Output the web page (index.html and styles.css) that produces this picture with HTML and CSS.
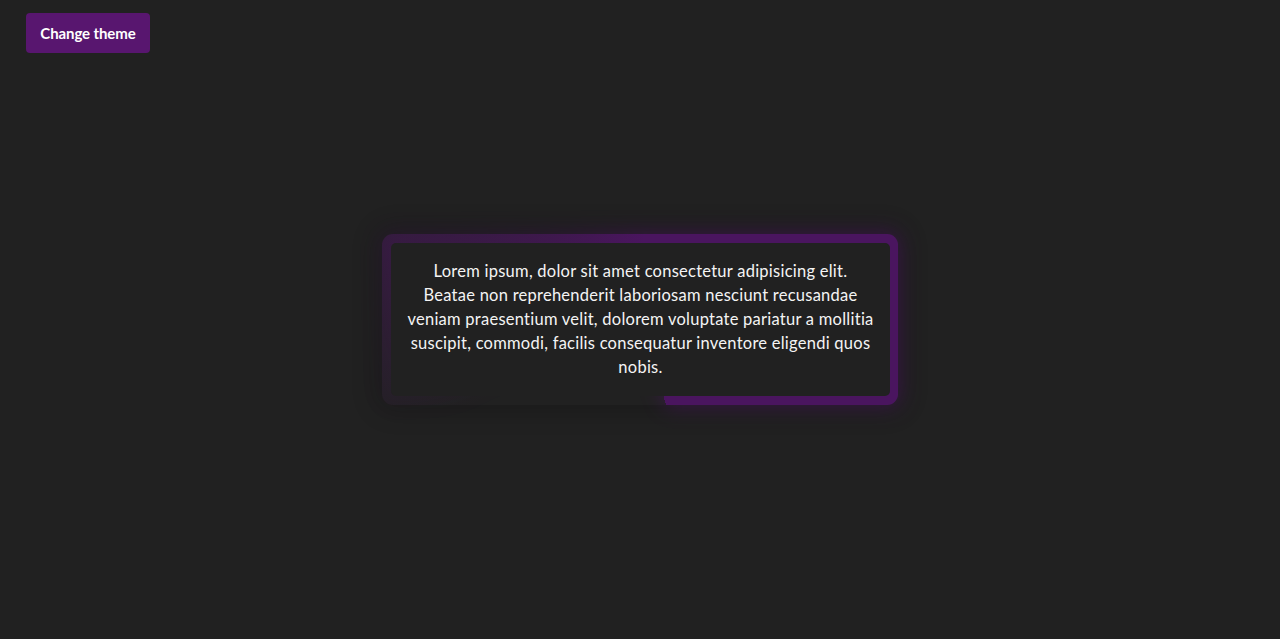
FILE: index.html
```html
<!DOCTYPE html>
<html lang="en">
<head>
<meta charset="utf-8">
<title>Card</title>
<link rel="stylesheet" href="styles.css">
</head>
<body>
  <header class="toolbar">
    <button class="theme-btn" type="button">Change theme</button>
  </header>
  <main class="stage">
    <div class="glow-card">
      <div class="card">
        <p>Lorem ipsum, dolor sit amet consectetur adipisicing elit. Beatae non reprehenderit laboriosam nesciunt recusandae veniam praesentium velit, dolorem voluptate pariatur a mollitia suscipit, commodi, facilis consequatur inventore eligendi quos nobis.</p>
      </div>
    </div>
  </main>
  <div class="spacer"></div>
</body>
</html>
```
FILE: styles.css
```css
* { box-sizing: border-box; }
html, body { margin: 0; padding: 0; }
body {
  background: #212121;
  height: 100vh;
  display: grid;
  grid-template-rows: 1fr auto 1fr;
  font-family: "Lato", "Open Sans", sans-serif;
  color: #f4f4f4;
  overflow: hidden;
}
.toolbar {
  padding: 13px 26px;
  align-self: start;
}
.theme-btn {
  width: 124px;
  height: 40px;
  border: 0;
  border-radius: 4px;
  background: #58166f;
  color: #ffffff;
  font-family: "Lato", sans-serif;
  font-weight: 700;
  font-size: 15px;
  letter-spacing: -0.1px;
  padding: 0 0 1px;
}
.stage {
  display: flex;
  justify-content: center;
}
.glow-card {
  position: relative;
  width: 516px;
  padding: 9px 8px 9px 9px;
  border-radius: 11px;
  box-shadow: 0 0 24px 6px rgba(0, 0, 0, 0.22);
  isolation: isolate;
}
.glow-card::before,
.glow-card::after {
  content: "";
  position: absolute;
  inset: 0;
  border-radius: 11px;
  background: conic-gradient(from 163deg, rgba(74,21,95,0) 0deg, rgba(74,21,95,0) 80deg, rgba(74,21,95,0.55) 140deg, #4a155f 200deg, #4a155f 360deg);
  z-index: -1;
}
.glow-card::after {
  inset: -2px;
  filter: blur(10px);
  opacity: 0.6;
  z-index: -2;
}
.card {
  background: #212121;
  border-radius: 5px;
  padding: 16px 6px 17px;
  text-align: center;
}
.card p {
  margin: 0 auto;
  max-width: 468px;
  font-size: 16.5px;
  line-height: 24px;
  letter-spacing: 0.25px;
}
```
